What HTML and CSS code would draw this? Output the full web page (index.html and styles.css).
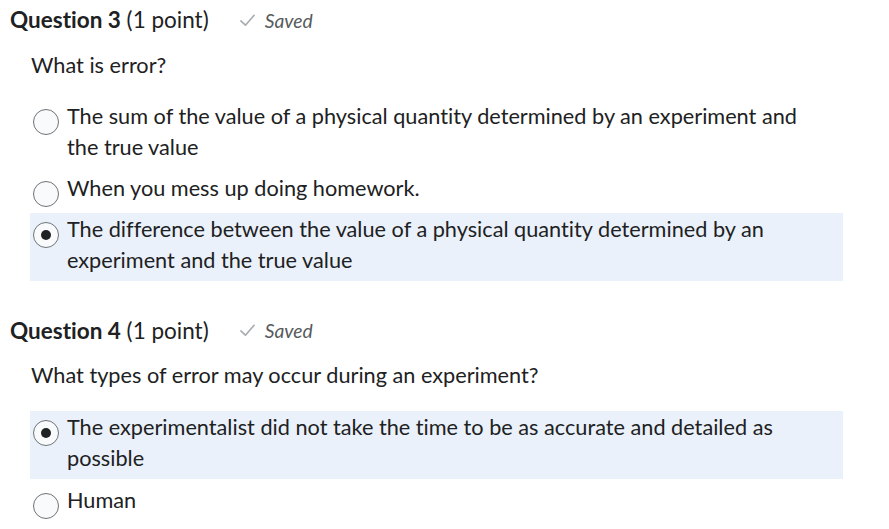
FILE: index.html
```html
<!DOCTYPE html>
<html lang="en">
<head>
<meta charset="utf-8">
<title>Quiz</title>
<link rel="stylesheet" href="styles.css">
</head>
<body>
<main class="quiz">
  <section class="question">
    <div class="q-head">
      <h2 class="q-title"><strong>Question 3</strong> (1 point)</h2>
      <span class="saved">
        <svg class="check" viewBox="0 0 18 18" width="17" height="17" aria-hidden="true"><path d="M2 9.5 L6.8 14 L16 3.5" fill="none" stroke="#a8adb1" stroke-width="1.8" stroke-linecap="round" stroke-linejoin="round"/></svg>
        <em>Saved</em>
      </span>
    </div>
    <div class="q-body">
      <p class="prompt">What is error?</p>
      <ul class="options">
        <li class="option"><span class="radio"></span><span class="label">The sum of the value of a physical quantity determined by an experiment and the true value</span></li>
        <li class="option"><span class="radio"></span><span class="label">When you mess up doing homework.</span></li>
        <li class="option selected"><span class="radio checked"></span><span class="label">The difference between the value of a physical quantity determined by an experiment and the true value</span></li>
      </ul>
    </div>
  </section>
  <section class="question">
    <div class="q-head">
      <h2 class="q-title"><strong>Question 4</strong> (1 point)</h2>
      <span class="saved">
        <svg class="check" viewBox="0 0 18 18" width="17" height="17" aria-hidden="true"><path d="M2 9.5 L6.8 14 L16 3.5" fill="none" stroke="#a8adb1" stroke-width="1.8" stroke-linecap="round" stroke-linejoin="round"/></svg>
        <em>Saved</em>
      </span>
    </div>
    <div class="q-body">
      <p class="prompt">What types of error may occur during an experiment?</p>
      <ul class="options">
        <li class="option selected"><span class="radio checked"></span><span class="label">The experimentalist did not take the time to be as accurate and detailed as possible</span></li>
        <li class="option"><span class="radio"></span><span class="label">Human</span></li>
      </ul>
    </div>
  </section>
</main>
</body>
</html>
```

FILE: styles.css
```css
* { box-sizing: border-box; }
body {
  margin: 0;
  background: #ffffff;
  font-family: Lato, "Open Sans", sans-serif;
  color: #202122;
  font-variant-ligatures: none;
}
.quiz {
  padding: 4px 0 0 10px;
}
.question {
  margin-bottom: 33.5px;
}
.q-head {
  display: flex;
  align-items: center;
  gap: 30px;
  height: 32px;
}
.q-title {
  margin: 0;
  font-size: 22.5px;
  font-weight: 400;
  line-height: 32px;
}
.q-title strong { font-weight: 700; }
.saved {
  display: flex;
  align-items: center;
  gap: 9px;
  color: #565a5c;
  font-size: 19.3px;
}
.q-body {
  padding-left: 20px;
  width: 833px;
}
.prompt {
  margin: 13.5px 0 15.5px 0;
  font-size: 21.7px;
  line-height: 30px;
  padding-left: 1px;
}
.options {
  list-style: none;
  margin: 0;
  padding: 0;
  display: flex;
  flex-direction: column;
}
.option {
  display: flex;
  align-items: flex-start;
  gap: 8px;
  padding: 6px 0 4px 3px;
  font-size: 21.7px;
  line-height: 31px;
}
.option.selected {
  margin-top: 5px;
  padding-top: 1px;
  padding-bottom: 5px;
  background: #eaf1fb;
}
.radio {
  flex: none;
  width: 26px;
  height: 26px;
  margin-top: 8px;
  margin-bottom: -3px;
  border: 1px solid #6e7477;
  border-radius: 50%;
  background: #f9fafb;
  display: flex;
  align-items: center;
  justify-content: center;
}
.radio.checked::after {
  content: "";
  width: 10px;
  height: 10px;
  border-radius: 50%;
  background: #202122;
}
.label { padding-right: 30px; }
```
